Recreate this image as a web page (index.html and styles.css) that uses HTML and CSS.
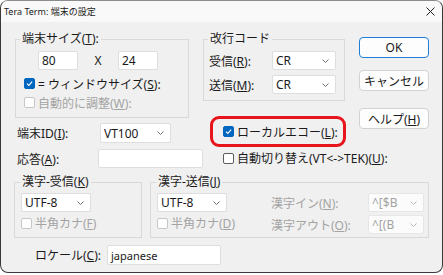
FILE: index.html
```html
<!DOCTYPE html>
<html lang="ja">

<head>
    <meta charset="UTF-8">
    <title>Tera Term: 端末の設定</title>
    <link rel="stylesheet" href="styles.css">
</head>

<body>
    <div class="window">
        <div class="titlebar">
            <span class="title">Tera Term: 端末の設定</span>
            <svg class="close" width="9" height="9" viewBox="0 0 9 9">
                <path d="M0.5 0.5L8.5 8.5M8.5 0.5L0.5 8.5" stroke="#1f1f1f" stroke-width="1" />
            </svg>
        </div>

        <div class="client">
            <div class="top">
                <fieldset class="group sizeGroup">
                    <legend>端末サイズ(<u>T</u>):</legend>
                    <div class="sizeRow">
                        <span class="edit sizeEdit">80</span>
                        <span class="times">X</span>
                        <span class="edit sizeEdit">24</span>
                    </div>
                    <div class="check"><span class="box on"></span><span>= ウィンドウサイズ(<u>S</u>):</span></div>
                    <div class="check off"><span class="box"></span><span>自動的に調整(<u>W</u>):</span></div>
                </fieldset>

                <fieldset class="group newlineGroup">
                    <legend>改行コード</legend>
                    <div class="fieldRow">
                        <span class="fieldLabel">受信(<u>R</u>):</span>
                        <span class="combo crCombo">CR<svg class="chev" width="7" height="4" viewBox="0 0 7 4"><path d="M0.5 0.5L3.5 3.5L6.5 0.5" /></svg></span>
                    </div>
                    <div class="fieldRow">
                        <span class="fieldLabel">送信(<u>M</u>):</span>
                        <span class="combo crCombo">CR<svg class="chev" width="7" height="4" viewBox="0 0 7 4"><path d="M0.5 0.5L3.5 3.5L6.5 0.5" /></svg></span>
                    </div>
                </fieldset>

                <div class="buttons">
                    <button class="default">OK</button>
                    <button class="cancel">キャンセル</button>
                    <button class="help">ヘルプ(<u>H</u>)</button>
                </div>

                <div class="termRows">
                    <div class="termRow">
                        <span class="termLabel">端末ID(<u>I</u>):</span>
                        <span class="combo idCombo">VT100<svg class="chev" width="7" height="4" viewBox="0 0 7 4"><path d="M0.5 0.5L3.5 3.5L6.5 0.5" /></svg></span>
                    </div>
                    <div class="termRow answerRow">
                        <span class="termLabel">応答(<u>A</u>):</span>
                        <span class="edit answerEdit"></span>
                    </div>
                </div>

                <div class="echoRows">
                    <div class="highlight">
                        <div class="check"><span class="box on"></span><span>ローカルエコー(<u>L</u>):</span></div>
                    </div>
                    <div class="check autoSwitch"><span class="box"></span><span>自動切り替え(VT&lt;-&gt;TEK)(<u>U</u>):</span></div>
                </div>
            </div>

            <div class="kanji">
                <fieldset class="group kanjiRecv">
                    <legend>漢字-受信(<u>K</u>)</legend>
                    <span class="combo utfCombo">UTF-8<svg class="chev" width="7" height="4" viewBox="0 0 7 4"><path d="M0.5 0.5L3.5 3.5L6.5 0.5" /></svg></span>
                    <div class="check off kana"><span class="box"></span><span>半角カナ(<u>F</u>)</span></div>
                </fieldset>

                <fieldset class="group kanjiSend">
                    <legend>漢字-送信(<u>J</u>)</legend>
                    <div class="sendCols">
                        <div class="sendLeft">
                            <span class="combo utfCombo">UTF-8<svg class="chev" width="7" height="4" viewBox="0 0 7 4"><path d="M0.5 0.5L3.5 3.5L6.5 0.5" /></svg></span>
                            <div class="check off kana"><span class="box"></span><span>半角カナ(<u>D</u>)</span></div>
                        </div>
                        <div class="sendRight">
                            <span class="dimLabel">漢字イン(<u>N</u>):</span>
                            <span class="combo escCombo">^[$B<svg class="chev" width="7" height="4" viewBox="0 0 7 4"><path d="M0.5 0.5L3.5 3.5L6.5 0.5" /></svg></span>
                            <span class="dimLabel">漢字アウト(<u>O</u>):</span>
                            <span class="combo escCombo">^[(B<svg class="chev" width="7" height="4" viewBox="0 0 7 4"><path d="M0.5 0.5L3.5 3.5L6.5 0.5" /></svg></span>
                        </div>
                    </div>
                </fieldset>
            </div>

            <div class="localeRow">
                <span class="localeLabel">ロケール(<u>C</u>):</span>
                <span class="edit localeEdit">japanese</span>
            </div>
        </div>
    </div>
</body>

</html>
```

FILE: styles.css
```css
* {
    box-sizing: border-box;
}

body {
    margin: 0;
    background-color: #ffffff;
    font-family: "Noto Sans", "Noto Sans CJK JP", sans-serif;
    font-size: 12px;
    color: #1a1a1a;
}

u {
    text-underline-offset: 1px;
}

.window {
    width: 443px;
    height: 273px;
    border: 1px solid #3a3a3a;
    border-top-color: #8c8c8c;
    border-radius: 8px;
    background-color: #f0f0f0;
    overflow: hidden;
}

.titlebar {
    height: 21px;
    background-color: #f9f9f9;
    display: flex;
    justify-content: space-between;
    align-items: center;
    padding: 0 7px 0 3px;
    font-size: 9px;
}

.client {
    padding: 9px 0 0 13px;
}

/* ---- controls ---- */

.group {
    margin: 0;
    min-width: 0;
    border: 1px solid #d9d9d9;
}

.group legend {
    padding: 0 2px;
    font-size: 12px;
    line-height: 16px;
}

.edit,
.combo {
    display: flex;
    align-items: center;
    height: 19px;
    padding: 0 3px;
    background-color: #ffffff;
    border: 1px solid #dedede;
    border-radius: 2px;
    line-height: 17px;
}

.combo {
    justify-content: space-between;
    padding-right: 6px;
}

.chev {
    fill: none;
    stroke: #707070;
    stroke-width: 1;
}

.check {
    display: flex;
    align-items: center;
    gap: 3px;
    height: 19px;
    white-space: nowrap;
}

.box {
    width: 11px;
    height: 11px;
    border: 1px solid #5c5c5c;
    border-radius: 2px;
    background-color: #ffffff;
    flex-shrink: 0;
}

.box.on {
    border-color: #0067c0;
    background: #0067c0 url("data:image/svg+xml,%3Csvg xmlns='http://www.w3.org/2000/svg' width='9' height='9'%3E%3Cpath d='M2 4.7L3.8 6.4L7.2 2.6' fill='none' stroke='white' stroke-width='1.1'/%3E%3C/svg%3E") center / 9px 9px no-repeat;
}

.check.off,
.dimLabel {
    color: #a3a3a3;
}

.check.off .box {
    border-color: #c6c6c6;
}

button {
    display: block;
    width: 70px;
    height: 21px;
    padding: 0;
    font-family: inherit;
    font-size: 12px;
    color: inherit;
    background-color: #fdfdfd;
    border: 1px solid #d2d2d2;
    border-radius: 4px;
}

button.default {
    border-color: #1f7fd6;
}

/* ---- top area ---- */

.top {
    display: grid;
    grid-template-columns: 189px 156px 70px;
}

.sizeGroup {
    margin-left: 1px;
    width: 174px;
    height: 87px;
    padding: 4px 0 0 8px;
}

.sizeGroup legend {
    margin-left: -4px;
}

.sizeRow {
    display: flex;
    margin-left: 14px;
    margin-bottom: 4px;
}

.sizeEdit {
    width: 40px;
}

.times {
    width: 40px;
    text-align: center;
    line-height: 19px;
}

.newlineGroup {
    width: 142px;
    height: 70px;
    padding: 4px 0 0 5px;
}

.newlineGroup legend {
    margin-left: -1px;
}

.fieldRow {
    display: flex;
    align-items: center;
    margin-bottom: 5px;
}

.fieldLabel {
    width: 63px;
}

.crCombo {
    width: 64px;
}

.buttons {
    grid-row: 1 / 3;
    grid-column: 3;
    padding-top: 6px;
}

.cancel {
    margin-top: 12px;
}

.help {
    margin-top: 17px;
}

.termRows {
    padding: 5px 0 0 3px;
}

.termRow {
    display: flex;
    align-items: center;
    white-space: nowrap;
}

.answerRow {
    margin-top: 6px;
}

.termLabel {
    width: 83px;
}

.idCombo {
    width: 71px;
    height: 20px;
}

.answerEdit {
    width: 108px;
    margin-left: 1px;
}

.highlight {
    margin: -2px 0 0 7px;
    width: 136px;
    height: 31px;
    padding-left: 10px;
    display: flex;
    align-items: center;
    border: 3px solid #e8141c;
    border-radius: 9px;
}

.autoSwitch {
    margin-left: 20px;
    height: 22px;
}

/* ---- kanji groups ---- */

.kanji {
    display: flex;
    gap: 8px;
    margin-top: 5px;
}

.kanjiRecv {
    width: 128px;
    height: 64px;
    padding: 3px 0 0 6px;
}

.kanjiRecv legend,
.kanjiSend legend {
    margin-left: -1px;
}

.utfCombo {
    width: 70px;
}

.kana {
    margin-top: 1px;
    height: 20px;
}

.kanjiSend {
    width: 279px;
    height: 64px;
    padding: 3px 0 0 6px;
}

.sendCols {
    display: flex;
}

.sendLeft {
    width: 114px;
}

.sendRight {
    display: grid;
    grid-template-columns: 97px 56px;
    row-gap: 3px;
    align-items: center;
    white-space: nowrap;
}

.escCombo {
    background-color: #fbfbfb;
    border-color: #e6e6e6;
    color: #a3a3a3;
}

.escCombo .chev {
    stroke: #b8b8b8;
}

/* ---- locale ---- */

.localeRow {
    display: flex;
    align-items: center;
    margin-top: 7px;
    padding-left: 21px;
}

.localeLabel {
    width: 72px;
}

.localeEdit {
    width: 114px;
    height: 20px;
    font-size: 11px;
}
```
